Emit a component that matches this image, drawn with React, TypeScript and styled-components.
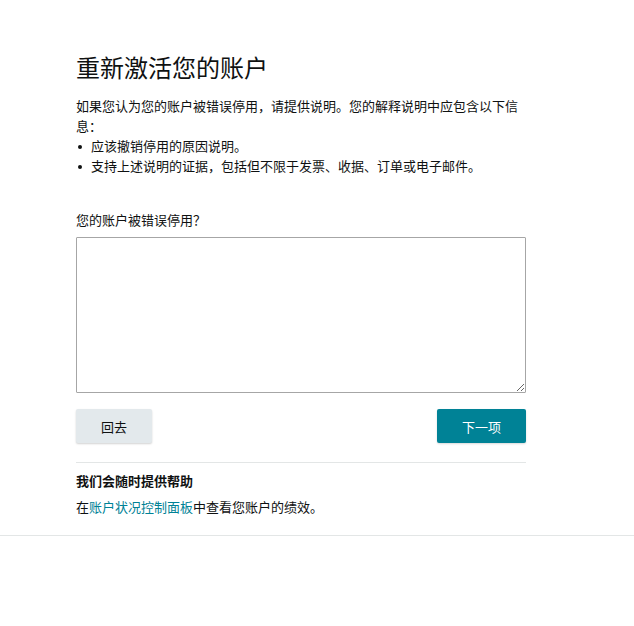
import React from "react";
import styled, { createGlobalStyle } from "styled-components";

const GlobalStyle = createGlobalStyle`
  html, body {
    margin: 0;
    padding: 0;
    background: #ffffff;
  }
  body {
    font-family: "Noto Sans CJK SC", "Liberation Sans", sans-serif;
    color: #0f1111;
  }
`;

const Page = styled.div`
  border-bottom: 1px solid #e3e6e6;
`;

const Content = styled.main`
  width: 450px;
  margin-left: 76px;
  padding-top: 50px;
  padding-bottom: 18px;
`;

const Title = styled.h1`
  margin: 0;
  font-size: 24px;
  font-weight: 400;
  line-height: 34px;
  color: #0f1111;
`;

const Intro = styled.p`
  margin: 12px 0 0;
  font-size: 13px;
  line-height: 20px;
`;

const BulletList = styled.ul`
  margin: 0;
  padding: 0;
  list-style: none;
  font-size: 13px;
  line-height: 20px;
`;

const Bullet = styled.li`
  position: relative;
  padding-left: 15px;

  &::before {
    content: "";
    position: absolute;
    left: 2px;
    top: 9px;
    width: 4px;
    height: 4px;
    border-radius: 50%;
    background: #0f1111;
  }
`;

const FieldLabel = styled.label`
  display: block;
  margin-top: 34px;
  font-size: 13px;
  line-height: 20px;
`;

const TextArea = styled.textarea`
  display: block;
  box-sizing: border-box;
  width: 450px;
  height: 156px;
  margin-top: 7px;
  border: 1px solid #a6a6a6;
  border-radius: 1px;
  font-family: inherit;
  font-size: 13px;
  resize: vertical;
`;

const ButtonRow = styled.div`
  display: flex;
  justify-content: space-between;
  margin-top: 16px;
`;

const Button = styled.button<{ $primary?: boolean }>`
  height: 34px;
  padding: 0 25px;
  min-width: ${(p) => (p.$primary ? "89px" : "76px")};
  border: none;
  border-radius: 2px;
  font-family: inherit;
  font-size: 13px;
  cursor: pointer;
  background: ${(p) => (p.$primary ? "#008296" : "#e3e9ec")};
  color: ${(p) => (p.$primary ? "#ffffff" : "#0f1111")};
  box-shadow: ${(p) =>
    p.$primary ? "0 1px 2px rgba(0,0,0,0.15)" : "0 1px 2px rgba(0,0,0,0.18)"};
`;

const Divider = styled.hr`
  margin: 19px 0 0;
  border: none;
  border-top: 1px solid #e3e6e6;
`;

const HelpTitle = styled.h2`
  margin: 8px 0 0;
  font-size: 13px;
  font-weight: 700;
  line-height: 20px;
`;

const HelpText = styled.p`
  margin: 6px 0 0;
  font-size: 13px;
  line-height: 20px;
`;

const Link = styled.a`
  color: #008296;
  text-decoration: none;
`;

export default function App() {
  return (
    <>
      <GlobalStyle />
      <Page>
        <Content>
          <Title>重新激活您的账户</Title>
          <Intro>
            如果您认为您的账户被错误停用，请提供说明。您的解释说明中应包含以下信息：
          </Intro>
          <BulletList>
            <Bullet>应该撤销停用的原因说明。</Bullet>
            <Bullet>支持上述说明的证据，包括但不限于发票、收据、订单或电子邮件。</Bullet>
          </BulletList>
          <FieldLabel htmlFor="reason">您的账户被错误停用？</FieldLabel>
          <TextArea id="reason" />
          <ButtonRow>
            <Button>回去</Button>
            <Button $primary>下一项</Button>
          </ButtonRow>
          <Divider />
          <HelpTitle>我们会随时提供帮助</HelpTitle>
          <HelpText>
            在<Link href="#">账户状况控制面板</Link>中查看您账户的绩效。
          </HelpText>
        </Content>
      </Page>
    </>
  );
}
